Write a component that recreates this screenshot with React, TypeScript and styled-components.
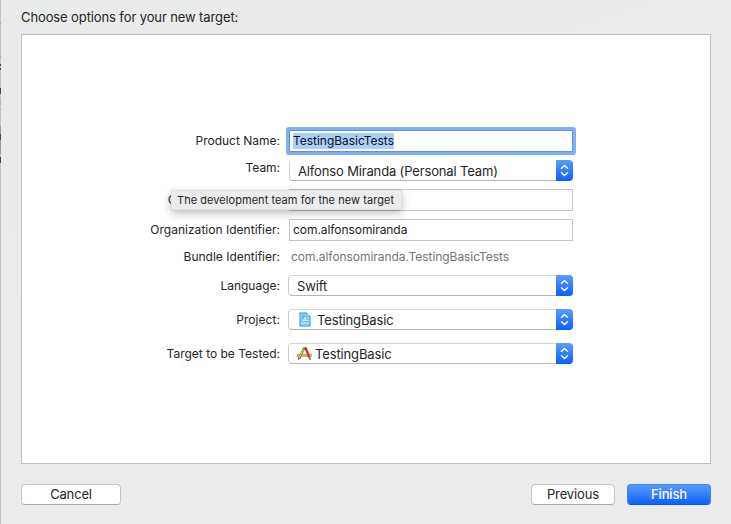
import React from 'react';
import styled, { createGlobalStyle } from 'styled-components';

const GlobalStyle = createGlobalStyle`
  * { box-sizing: border-box; }
  html, body { margin: 0; padding: 0; }
  body { width: 731px; height: 524px; overflow: hidden; background: #ececec; }
  button { font: inherit; margin: 0; }
`;

const Sheet = styled.main`
  position: relative;
  width: 731px;
  height: 524px;
  padding: 7px 20px 0 21px;
  display: flex;
  flex-direction: column;
  background: linear-gradient(160deg, #e9eaea 0%, #ebebeb 30%, #ececec 100%);
  font-family: Inter, 'Liberation Sans', sans-serif;
  color: #262626;
`;

const WindowEdge = styled.svg`
  position: absolute;
  left: 0;
  top: 0;
`;

const Text = styled.span<{ $track?: number }>`
  letter-spacing: ${p => p.$track ?? 0}px;
  white-space: pre;
`;

const Title = styled.h1`
  margin: 0;
  height: 27px;
  font-size: 13px;
  line-height: 21px;
  font-weight: 400;
`;

const Panel = styled.section`
  height: 430px;
  border: 1px solid #bfbfbf;
  background: #fff;
  padding-top: 95px;
`;

const Row = styled.div<{ $gap: number; $height: number }>`
  display: flex;
  height: ${p => p.$height}px;
  margin-top: ${p => p.$gap}px;
`;

const Label = styled.label<{ $shift?: number }>`
  width: 258px;
  margin-right: 9px;
  margin-top: ${p => p.$shift ?? 0}px;
  text-align: right;
  font-size: 12px;
  line-height: 22px;
`;

const Field = styled.div<{ $focused?: boolean }>`
  width: 284px;
  height: 22px;
  border: 1px solid ${p => (p.$focused ? '#5f93e6' : '#c6c6c6')};
  box-shadow: ${p => (p.$focused ? '0 0 0 3px #80adf8' : 'none')};
  border-radius: ${p => (p.$focused ? 1 : 0)}px;
  background: #fff;
  padding: 2px 3px;
  font-size: 12px;
  line-height: 16px;
  color: #1c1c1c;
`;

const Selection = styled.mark`
  display: inline-block;
  height: 16px;
  background: #a9cffc;
  color: #111;
`;

const Value = styled.span`
  padding-left: 2px;
  font-size: 12px;
  line-height: 22px;
  color: #757575;
`;

const Popup = styled.div<{ $inset: number; $wide?: boolean }>`
  display: flex;
  align-items: center;
  width: ${p => (p.$wide ? 285 : 284)}px;
  height: 21px;
  margin-left: ${p => (p.$wide ? -1 : 0)}px;
  padding-left: ${p => p.$inset}px;
  border: 1px solid #cdcdcd;
  border-top-color: ${p => (p.$wide ? '#d5d5d5' : '#fff')};
  border-bottom-color: #b4b4b4;
  border-right: 0;
  border-radius: 4px;
  background: #fff;
  font-size: 13px;
  line-height: 19px;
`;

const PopupText = styled.span`
  flex: 1;
  padding-top: 2px;
`;

const Stepper = styled.span`
  display: flex;
  align-items: center;
  justify-content: center;
  width: 17px;
  height: 21px;
  margin: -1px 0;
  border-radius: 0 4px 4px 0;
  background: linear-gradient(#5b9df9, #0a5fff);
`;

const Tooltip = styled.div`
  position: absolute;
  left: 171px;
  top: 190px;
  width: 231px;
  height: 20px;
  padding-left: 5px;
  border: 1px solid #e2e2e2;
  border-radius: 1px;
  background: #ececec;
  box-shadow: 0 3px 8px rgba(0, 0, 0, 0.26), 0 0 1px rgba(0, 0, 0, 0.18);
  font-size: 11px;
  line-height: 18px;
`;

const Footer = styled.footer`
  display: flex;
  gap: 12px;
  margin-top: 20px;
`;

const Button = styled.button<{ $width: number; $primary?: boolean; $first?: boolean }>`
  width: ${p => p.$width}px;
  height: 21px;
  padding: 0;
  margin-right: ${p => (p.$first ? 'auto' : 0)};
  border: 1px solid ${p => (p.$primary ? '#3d86ee' : '#c5c5c5')};
  border-bottom-color: ${p => (p.$primary ? '#0758e8' : '#acacac')};
  border-radius: 4px;
  background: ${p => (p.$primary ? 'linear-gradient(#5c9df9, #0a60ff)' : '#fff')};
  background-origin: border-box;
  color: ${p => (p.$primary ? '#fff' : '#262626')};
  font-size: 13px;
  font-weight: ${p => (p.$primary ? 500 : 400)};
  line-height: 19px;
`;

const Arrows = () => (
  <Stepper>
    <svg width="9" height="13" viewBox="0 0 9 13" fill="none" stroke="#fff" strokeWidth="1.5" strokeLinecap="round" strokeLinejoin="round">
      <path d="M1.5 4.3 4.5 1.5l3 2.8M1.5 8.7l3 2.8 3-2.8" />
    </svg>
  </Stepper>
);

const IconSlot = styled.svg<{ $right: number }>`
  flex: none;
  margin-right: ${p => p.$right}px;
`;

const ProjectIcon = () => (
  <IconSlot $right={6} width="12" height="15" viewBox="0 0 12 15">
    <path d="M.5.5h7l4 4v10H.5z" fill="#1f93f5" />
    <path d="M2 2h4.7v3.3H10V13H2z" fill="#58b8fb" stroke="#d3edff" strokeWidth=".8" />
    <path d="M7.6.8v3.6h3.6z" fill="#9bd2fc" />
    <path d="m4 8.9 2-3.2 2 3.2M3.6 8.3h4.8M3 11h6" fill="none" stroke="#fff" strokeWidth="1" />
  </IconSlot>
);

const TargetIcon = () => (
  <IconSlot $right={3} width="15" height="15" viewBox="0 0 15 15" fill="none">
    <path d="M.4 8.2h14v2.4H.4z" fill="#e3bd62" stroke="#a58543" strokeWidth=".5" />
    <path d="M3 8.5v1M5 8.5v1M7 8.5v1M9 8.5v1M11 8.5v1" stroke="#80652e" strokeWidth=".5" />
    <path d="M7.2 2 2 12.7" stroke="#77602f" strokeWidth="2.4" />
    <path d="M7 2.3 2 12.5" stroke="#e3bd5b" strokeWidth="1.4" />
    <path d="m6 3 1.7-1.5" stroke="#8b847d" strokeWidth="1.6" />
    <path d="m8.3 1.2 4.1 10" stroke="#c9312d" strokeWidth="2.3" />
    <path d="m12 10.6 1.5 3.4" stroke="#8a6a58" strokeWidth="1.6" />
    <path d="m1.4 11.6-.5 2.6 2.2-1.6" fill="#55443a" />
  </IconSlot>
);

export default function App() {
  return (
    <>
      <GlobalStyle />
      <Sheet>
        <WindowEdge width="2" height="524" aria-hidden="true">
          <path d="M.5 0v524" stroke="#c2c2c2" />
          <path d="M.5 23v1M.5 56v1M.5 102v1M.5 109v1M.5 126v8M.5 140v14" stroke="#9a9a9a" />
          <path d="M.5 64v2M.5 68v2M.5 88v6M.5 134v6M.5 157v6" stroke="#484848" />
        </WindowEdge>
        <Title><Text $track={-0.11}>Choose options for your new target:</Text></Title>
        <Panel>
          <Row $gap={0} $height={22}>
            <Label><Text>Product Name:</Text></Label>
            <Field $focused><Selection><Text $track={-0.03}>TestingBasicTests</Text></Selection></Field>
          </Row>
          <Row $gap={8} $height={21}>
            <Label $shift={-3}><Text $track={-0.05}>Team:</Text></Label>
            <Popup $inset={8}><PopupText><Text $track={-0.15}>Alfonso Miranda (Personal Team)</Text></PopupText><Arrows /></Popup>
          </Row>
          <Row $gap={8} $height={22}>
            <Label><Text>Organization Name:</Text></Label>
            <Field />
          </Row>
          <Row $gap={8} $height={22}>
            <Label><Text $track={0.02}>Organization Identifier:</Text></Label>
            <Field><Text $track={-0.06}>com.alfonsomiranda</Text></Field>
          </Row>
          <Row $gap={5} $height={22}>
            <Label><Text>Bundle Identifier:</Text></Label>
            <Value><Text $track={-0.05}>com.alfonsomiranda.TestingBasicTests</Text></Value>
          </Row>
          <Row $gap={7} $height={21}>
            <Label><Text>Language:</Text></Label>
            <Popup $wide $inset={8}><PopupText><Text $track={-0.1}>Swift</Text></PopupText><Arrows /></Popup>
          </Row>
          <Row $gap={13} $height={21}>
            <Label><Text $track={0.05}>Project:</Text></Label>
            <Popup $wide $inset={10}><ProjectIcon /><PopupText><Text $track={-0.13}>TestingBasic</Text></PopupText><Arrows /></Popup>
          </Row>
          <Row $gap={13} $height={21}>
            <Label><Text>Target to be Tested:</Text></Label>
            <Popup $wide $inset={8}><TargetIcon /><PopupText><Text $track={-0.13}>TestingBasic</Text></PopupText><Arrows /></Popup>
          </Row>
        </Panel>
        <Footer>
          <Button $width={100} $first><Text $track={-0.15}>Cancel</Text></Button>
          <Button $width={84}><Text $track={-0.12}>Previous</Text></Button>
          <Button $width={84} $primary><Text $track={-0.15}>Finish</Text></Button>
        </Footer>
        <Tooltip role="tooltip"><Text $track={0.05}>The development team for the new target</Text></Tooltip>
      </Sheet>
    </>
  );
}
